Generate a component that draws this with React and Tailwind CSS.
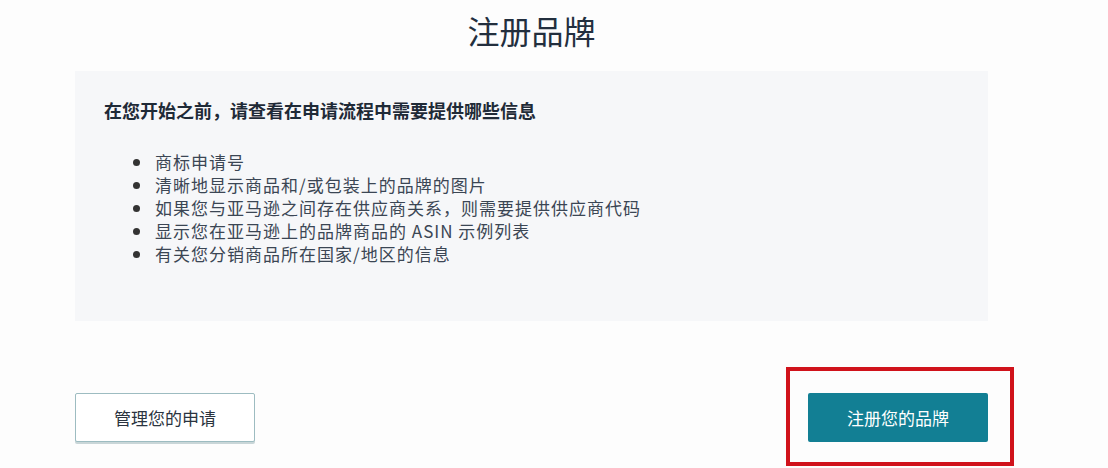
import React from 'react';

const items = [
  '商标申请号',
  '清晰地显示商品和/或包装上的品牌的图片',
  '如果您与亚马逊之间存在供应商关系，则需要提供供应商代码',
  '显示您在亚马逊上的品牌商品的 ASIN 示例列表',
  '有关您分销商品所在国家/地区的信息',
];

function App() {
  return (
    <div
      className="w-[1108px] h-[468px] bg-[#fdfdfd] overflow-hidden text-[#232f3e]"
      style={{ fontFamily: '"Noto Sans CJK SC", "Noto Sans", sans-serif' }}
    >
      <div className="ml-[75px] w-[913px] pt-[10px]">
        <h1 className="text-center text-[32px] leading-[40px] font-normal">注册品牌</h1>

        <div className="mt-[21px] h-[250px] bg-[#f6f7f9] pl-[29px] pt-[27px]">
          <p className="text-[18px] leading-[24px] font-bold text-[#1f2a37]">
            在您开始之前，请查看在申请流程中需要提供哪些信息
          </p>
          <ul className="mt-[28px] list-disc pl-[49px] text-[17px] leading-[23px] tracking-[1px] text-[#3b4654] marker:text-[#333]">
            {items.map((t) => (
              <li key={t} className="pl-[2px]">{t}</li>
            ))}
          </ul>
        </div>

        <div className="mt-[72px] flex justify-between items-start">
          <button className="w-[180px] h-[49px] bg-white border border-[#9dbcc1] rounded-[2px] shadow-[0_2px_0_#c9d6d8] text-[17px] text-[#2b3440]">
            管理您的申请
          </button>
          <div className="relative">
            <button className="w-[180px] h-[49px] bg-[#127f94] rounded-[2px] text-[17px] text-white">
              注册您的品牌
            </button>
            <div className="absolute left-[-22px] right-[-26px] top-[-26px] bottom-[-24px] border-4 border-[#d0121b] pointer-events-none"></div>
          </div>
        </div>
      </div>
    </div>
  );
}

export default App;
